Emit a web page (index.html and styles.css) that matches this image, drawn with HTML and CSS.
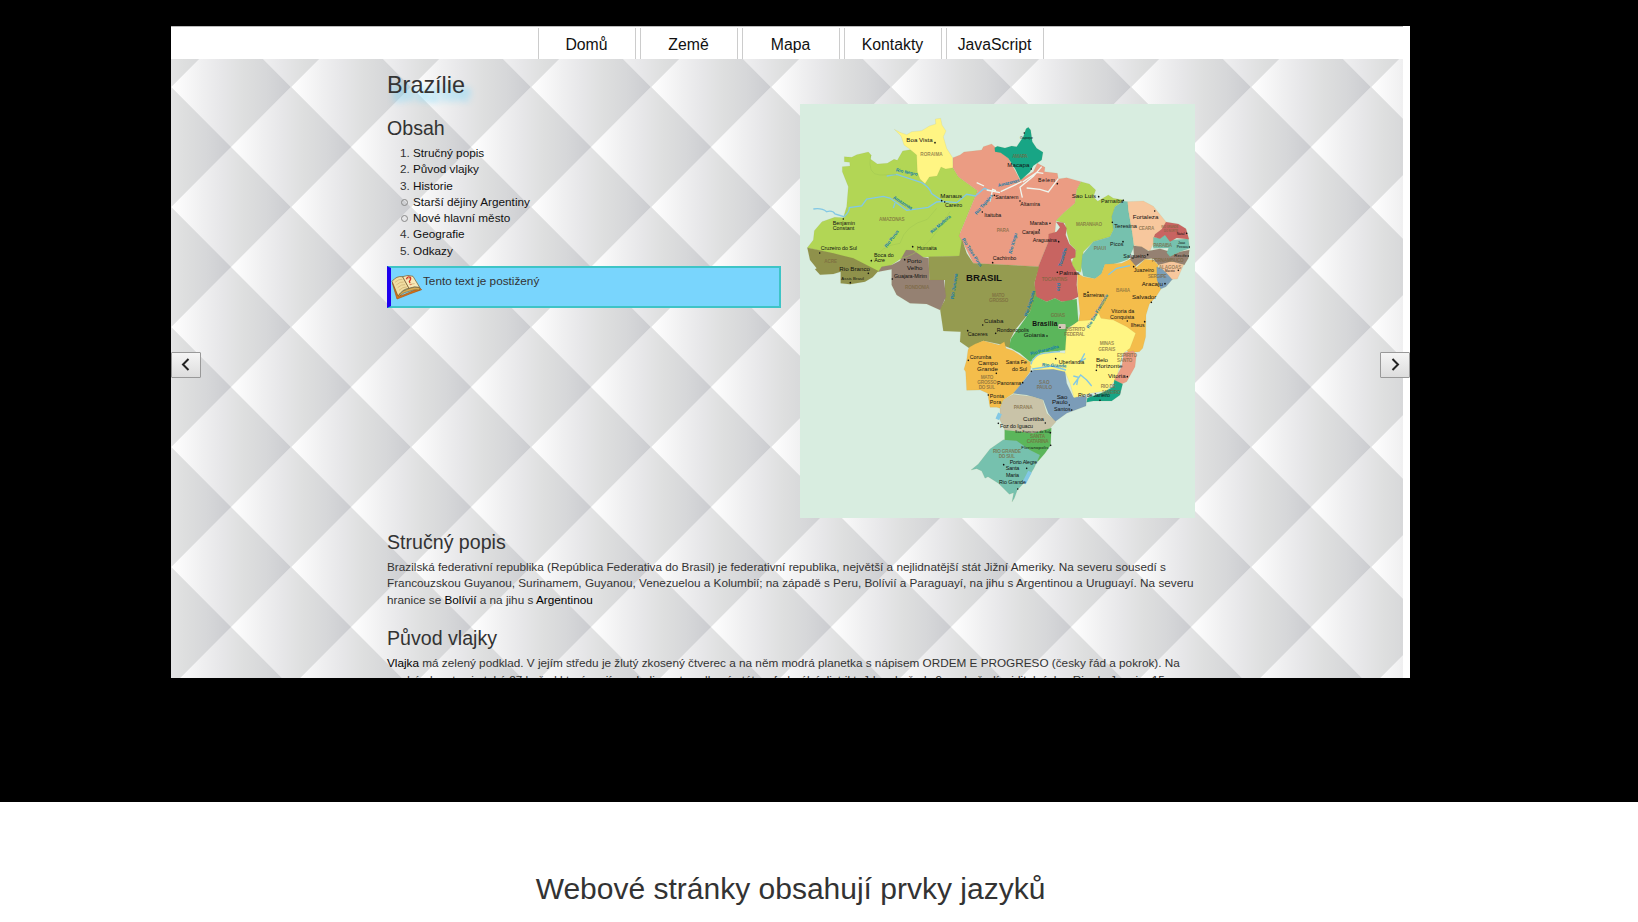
FILE: index.html
```html
<!DOCTYPE html>
<html lang="cs">
<head>
<meta charset="utf-8">
<title>Brazílie</title>
<link rel="stylesheet" href="styles.css">
</head>
<body>
<section class="showcase">
  <div class="slide">
    <nav class="nav">
      <a class="nav-item">Domů</a><a class="nav-item">Země</a><a class="nav-item">Mapa</a><a class="nav-item">Kontakty</a><a class="nav-item">JavaScript</a>
    </nav>
    <div class="page">
      <svg class="pattern" width="1232" height="619">
        <defs>
          <linearGradient id="facet" x1="0" x2="1" y1="0" y2="0">
            <stop offset="0" stop-color="#ffffff"/>
            <stop offset=".25" stop-color="#f0f0f1"/>
            <stop offset=".42" stop-color="#e7e7e9"/>
            <stop offset=".6" stop-color="#dedfdf"/>
            <stop offset=".8" stop-color="#d6d7d9"/>
            <stop offset="1" stop-color="#cbccd0"/>
          </linearGradient>
          <pattern id="quilt" width="120" height="120" y="28" patternUnits="userSpaceOnUse">
            <rect width="120" height="120" fill="#e5e5e6"/>
            <path d="M0 0L60-60L120 0L60 60Z" fill="url(#facet)"/>
            <path d="M0 120L60 60L120 120L60 180Z" fill="url(#facet)"/>
            <path d="M-60 60L0 0L60 60L0 120Z" fill="url(#facet)"/>
            <path d="M60 60L120 0L180 60L120 120Z" fill="url(#facet)"/>
          </pattern>
        </defs>
        <rect width="1232" height="619" fill="url(#quilt)"/>
      </svg>
      <main class="content">
        <div class="top">
          <div class="intro">
            <h1 class="title">Brazílie</h1>
            <h2 class="heading">Obsah</h2>
            <ul class="toc">
              <li><span class="num">1.</span>Stručný popis</li>
              <li><span class="num">2.</span>Původ vlajky</li>
              <li><span class="num">3.</span>Historie</li>
              <li><span class="num ring"></span>Starší dějiny Argentiny</li>
              <li><span class="num ring"></span>Nové hlavní město</li>
              <li><span class="num">4.</span>Geografie</li>
              <li><span class="num">5.</span>Odkazy</li>
            </ul>
            <div class="note">
              <svg class="book" width="31" height="27" viewBox="0 0 93 81">
                <path d="M4 27L7 23L29 66L87 42L92 47L56 60L18 75Z" fill="#dc7416" stroke="#a95411" stroke-width="2"/>
                <path d="M3 22Q17 5 35 8L54 43Q35 45 21 66Z" fill="#f0dda0" stroke="#71501f" stroke-width="2"/>
                <path d="M35 8Q51 1 66 7L86 40Q70 36 54 43Z" fill="#f8e9b8" stroke="#71501f" stroke-width="2"/>
                <path d="M21 66Q36 47 54 44Q69 37 87 41L85 48Q70 45 57 51Q39 53 23 68Z" fill="#d8ad56" stroke="#71501f" stroke-width="1.5"/>
                <path d="M12 25Q24 14 34 16M16 33Q28 22 38 24M20 41Q32 30 42 32M24 49Q36 38 47 39M48 15L60 12M54 31L71 29" fill="none" stroke="#c8a96c" stroke-width="2"/>
                <path d="M46 16Q50 5 58 10Q61 15 55 22L57 27M59 31L60 33" fill="none" stroke="#d13624" stroke-width="4"/>
              </svg>
              <span>Tento text je postižený</span>
            </div>
          </div>
          <svg class="map" width="395" height="414" viewBox="0 12 1185 1242">
            <rect y="12" width="1185" height="1242" fill="#d8ede0"/>
            <g class="land">
              <path fill="#b2d655" d="M133 170L155 172L170 164L205 156L214 166L211 177L232 192L262 190L282 178L292 181L308 153L330 149L352 157L459 203L475 230L533 272L480 400L490 430L485 468L372 472L300 478L270 498L235 515L100 462L22 443L40 420L43 392L66 365L104 352L130 353L140 320L145 260L127 215L127 200L150 198L149 187L133 185Z"/>
              <path fill="#fff583" d="M283 88L300 97L320 104L335 95L365 92L388 78L407 72L406 57L422 55L426 75L438 93L430 110L440 145L458 173L459 203L437 207L423 201L411 228L388 231L375 251L360 237L352 215L350 165L328 146L312 135L303 108Z"/>
              <path fill="#eb9c83" d="M459 173L480 165L492 156L545 150L550 140L575 132L600 155L625 175L660 240L700 215L712 190L735 202L733 215L772 220L775 237L800 233L843 245L830 270L825 310L790 340L768 362L765 395L745 425L715 500L580 493L520 490L490 430L477 408L533 272L475 230L459 203Z"/>
              <path fill="#18a585" d="M584 143L592 139L615 144L635 138L650 140L670 110L678 86L685 82L692 90L697 125L710 145L729 157L725 180L700 197L690 215L662 241L646 208L625 175L602 158L585 155Z"/>
              <path fill="#b2d655" d="M843 245L868 252L887 270L880 290L893 304L925 285L940 295L972 300L945 320L937 350L940 390L930 410L880 425L850 455L845 500L842 517L825 510L815 490L828 450L810 432L801 400L795 370L768 362L790 340L825 310L830 270Z"/>
              <path fill="#c86461" d="M768 365L790 368L800 385L797 405L808 432L827 450L826 472L812 477L818 496L832 520L830 555L835 590L810 603L785 605L765 595L740 605L705 590L703 550L715 500L745 425L746 402L770 395L780 382Z"/>
              <path fill="#76c1ae" d="M970 303L983 305L985 330L997 400L1002 440L985 478L965 485L930 495L915 493L904 522L885 536L850 528L844 500L847 465L880 425L930 410L940 390L935 350L945 320Z"/>
              <path fill="#f7c79d" d="M983 305L1030 303L1060 319L1100 368L1085 390L1070 403L1060 430L1050 453L1002 435L997 400L985 330Z"/>
              <path fill="#958172" d="M1000 437L1025 440L1045 453L1080 446L1105 454L1110 467L1140 455L1168 450L1165 475L1153 495L1115 487L1075 495L1060 475L1035 478L1002 502L985 482L1002 465Z"/>
              <path fill="#76c1ae" d="M1060 412L1080 415L1098 402L1115 420L1165 416L1169 445L1140 455L1110 470L1100 458L1106 444L1060 445Z"/>
              <path fill="#c86461" d="M1098 366L1135 372L1158 386L1167 418L1130 414L1110 425L1095 405L1080 416L1062 411L1065 403L1085 388Z"/>
              <path fill="#f4bd4b" d="M833 520L850 530L885 536L904 522L915 493L965 490L990 478L1010 502L1035 478L1060 480L1075 495L1070 530L1083 567L1068 590L1048 612L1038 645L1037 710L1028 745L1018 755L985 758L950 690L880 660L835 668L840 640L832 560Z"/>
              <path fill="#7b9fb8" d="M1070 500L1095 510L1118 537L1098 560L1082 567L1071 540Z"/>
              <path fill="#f7c79d" d="M1075 495L1115 484L1151 494L1132 537L1116 538L1100 520Z"/>
              <path fill="#959b50" d="M386 470L478 468L486 418L500 460L520 490L580 493L717 500L703 550L710 590L690 635L645 690L630 720L632 745L600 733L550 722L525 735L508 745L480 725L482 695L430 693L420 625L435 600L435 540L388 540Z"/>
              <path fill="#8f914b" d="M22 443L100 460L160 475L235 513L218 532L195 545L150 553L122 550L122 515L100 522L60 524L45 508L50 505L30 480Z"/>
              <path fill="#958172" d="M235 515L245 500L275 495L300 482L318 450L340 451L370 472L386 475L388 540L432 540L438 590L420 630L380 612L330 610L290 585L275 555L275 508Z"/>
              <path fill="#5bb65b" d="M705 588L740 605L765 595L785 605L830 597L835 665L803 684L801 750L750 755L720 775L690 785L660 760L628 742L632 718L690 635Z"/>
              <path fill="#f4bd4b" d="M508 742L525 732L550 722L597 735L613 725L618 745L640 752L695 790L690 815L665 850L640 880L610 900L600 925L590 922L570 922L563 880L541 870L500 871L497 815L492 808L500 780L504 750Z"/>
              <path fill="#7b9cb8" d="M695 812L730 803L795 810L800 850L820 892L860 890L858 918L800 940L765 965L745 940L730 900L680 885L640 880L665 850Z"/>
              <path fill="#fff583" d="M690 795L698 776L725 758L750 755L795 760L800 690L835 663L872 660L896 640L903 655L940 660L980 680L1007 700L990 745L967 762L950 835L920 872L870 880L822 893L810 850L795 815L760 808L700 810Z"/>
              <path fill="#eb9c83" d="M972 758L1000 752L1009 765L1005 800L980 845L965 852L943 840L965 800Z"/>
              <path fill="#18a585" d="M943 840L968 852L960 885L935 903L880 903L860 907L862 894L910 877L940 860Z"/>
              <path fill="#c9c3a8" d="M600 925L610 900L640 883L700 890L728 900L740 940L768 965L750 985L700 1002L650 993L614 990L600 960Z"/>
              <path fill="#5bb65b" d="M614 990L700 1000L754 984L752 1035L735 1060L713 1085L690 1060L614 1020Z"/>
              <path fill="#76c1ae" d="M513 1110L535 1092L570 1047L610 1019L650 1022L690 1050L720 1065L702 1105L680 1140L652 1170L643 1195L636 1206L641 1178L628 1183L595 1150L564 1130L555 1135L545 1113L530 1106Z"/>
            </g>
            <g class="water">
              <path d="M40 327Q65 323 80 335Q98 330 105 342L132 350Q148 336 148 323L185 318L200 297L250 289L270 294L290 309L320 331L385 322L410 306L430 304L470 308L500 283L526 288L553 265L570 272M260 228L290 223L365 248Q388 261 395 281L425 301M285 309L280 324M925 524L950 505L990 497M854 760L841 785L857 775M820 828L835 832L830 855M820 855L842 825L860 840L875 858"/>
              <path class="stream" d="M212 165Q201 225 240 225L288 224M213 490Q242 435 300 430Q315 375 382 358L410 325M300 475Q375 465 450 335"/>
              <path d="M693 793Q700 765 729 760L780 754M697 807L755 798L798 810"/>
              <path class="lake" d="M592 958L600 940M672 1150L690 1115"/>
              <path class="delta" d="M530 248L552 258M560 270L600 278M570 305L578 268L588 272M602 275L665 245M667 293L660 262L700 229L725 200M680 264L720 268L745 276L775 236M668 246L710 217L730 220"/>
            </g>
            <g class="state">
              <text x="361" y="169" textLength="67">RORAIMA</text><text x="237" y="362" textLength="77">AMAZONAS</text><text x="73" y="490" textLength="38">ACRE</text><text x="315" y="568" textLength="73">RONDONIA</text><text x="590" y="395" textLength="37">PARA</text><text x="637" y="174" textLength="46">AMAPA</text><text x="828" y="378" textLength="78">MARANHAO</text><text x="881" y="451" textLength="37">PIAUI</text><text x="1016" y="390" textLength="47">CEARA</text><text x="1060" y="440" textLength="56">PARAIBA</text><text x="1055" y="487" textLength="96">PERNAMBUCO</text><text x="1076" y="507" textLength="68">ALAGOAS</text><text x="1044" y="534" textLength="56">SERGIPE</text><text x="725" y="542" textLength="77">TOCANTINS</text><text x="948" y="576" textLength="42">BAHIA</text><text x="576" y="590" textLength="38">MATO</text><text x="567" y="606" textLength="58">GROSSO</text><text x="752" y="652" textLength="43">GOIAS</text><text x="796" y="692" textLength="59">DISTRITO</text><text x="793" y="709" textLength="61">FEDERAL</text><text x="899" y="736" textLength="43">MINAS</text><text x="895" y="752" textLength="51">GERAIS</text><text x="951" y="770" textLength="60">ESPIRITO</text><text x="951" y="786" textLength="46">SANTO</text><text x="542" y="836" textLength="38">MATO</text><text x="532" y="852" textLength="58">GROSSO</text><text x="536" y="867" textLength="49">DO SUL</text><text x="717" y="852" textLength="32">SAO</text><text x="710" y="868" textLength="46">PAULO</text><text x="641" y="926" textLength="57">PARANA</text><text x="690" y="1014" textLength="45">SANTA</text><text x="680" y="1029" textLength="66">CATARINA</text><text x="579" y="1058" textLength="84">RIO GRANDE</text><text x="596" y="1074" textLength="49">DO SUL</text><text x="902" y="865" textLength="45">RIO DE</text><text x="904" y="881" textLength="58">JANEIRO</text>
              <text x="1084" y="385" class="tiny">RIO GRANDE</text><text x="1092" y="397" class="tiny">DO NORTE</text>
            </g>
            <g class="river">
              <text transform="translate(287 214) rotate(12)" textLength="66">Rio Negro</text><text transform="translate(278 295) rotate(32)" textLength="66">Amazonas</text><text transform="translate(260 444) rotate(-53)" textLength="62">Rio Purus</text><text transform="translate(396 401) rotate(-41)" textLength="76">Rio Madeira</text><text transform="translate(530 345) rotate(-49)" textLength="76">Rio Tapajos</text><text transform="translate(485 418) rotate(57)" textLength="100">Rio Teles Pires</text><text transform="translate(461 598) rotate(-81)" textLength="78">Rio Juruena</text><text transform="translate(635 462) rotate(-75)" textLength="64">Rio Xingu</text><text transform="translate(595 261) rotate(-14)" textLength="66">Amazonas</text><text transform="translate(784 500) rotate(-73)" textLength="58">Tocantins</text><text transform="translate(770 550) rotate(85)" textLength="24">Rio</text><text transform="translate(682 650) rotate(-73)" textLength="80">Rio Araguaia</text><text transform="translate(692 766) rotate(-15)" textLength="88">Rio Paranaiba</text><text transform="translate(726 799) rotate(3)" textLength="73">Rio Grande</text><text transform="translate(867 686) rotate(-60)" textLength="116">Rio Sao Francisco</text>
            </g>
            <g class="city">
              <text x="319" y="127" textLength="79" class="mid">Boa Vista</text><text x="421" y="294" textLength="65" class="mid">Manaus</text><text x="435" y="322" textLength="52">Careiro</text><text x="98" y="374" textLength="67">Benjamin</text><text x="98" y="391" textLength="65">Constant</text><text x="62" y="451" textLength="109">Cruzeiro do Sul</text><text x="222" y="470" textLength="59">Boca do</text><text x="223" y="487" textLength="32">Acre</text><text x="351" y="451" textLength="59">Humaita</text><text x="118" y="512" textLength="92" class="mid">Rio Branco</text><text x="124" y="541" textLength="68" class="small2">Assis Brasil</text><text x="321" y="490" textLength="44" class="mid">Porto</text><text x="321" y="511" textLength="46" class="mid">Velho</text><text x="282" y="533" textLength="99">Guajara-Mirim</text><text x="498" y="543" textLength="108" class="country">BRASIL</text><text x="622" y="202" textLength="66" class="mid">Macapa</text><text x="660" y="116" class="tiny">Oiapoque</text><text x="714" y="247" textLength="51">Belem</text><text x="586" y="297" textLength="69">Santarem</text><text x="661" y="319" textLength="59">Altamira</text><text x="553" y="350" textLength="51">Itaituba</text><text x="689" y="375" textLength="54">Maraba</text><text x="666" y="402" textLength="54">Carajas</text><text x="698" y="426" textLength="72">Araguaina</text><text x="578" y="481" textLength="71">Cachimbo</text><text x="815" y="293" textLength="73" class="mid">Sao Luis</text><text x="903" y="309" textLength="67">Parnaiba</text><text x="998" y="358" textLength="77" class="mid">Fortaleza</text><text x="942" y="384" textLength="69" class="mid">Teresina</text><text x="930" y="438" textLength="40">Picos</text><text x="970" y="473" textLength="68">Salgueiro</text><text x="1001" y="515" textLength="61">Juazeiro</text><text x="1025" y="557" textLength="64" class="mid">Aracaju</text><text x="996" y="597" textLength="73" class="mid">Salvador</text><text x="777" y="526" textLength="62" class="mid">Palmas</text><text x="849" y="592" textLength="64">Barreiras</text><text x="1130" y="405" class="small">Natal</text><text x="1134" y="432" class="small">Joao</text><text x="1130" y="443" class="small">Pessoa</text><text x="1123" y="470" textLength="38" class="small2">Recife</text><text x="1095" y="516" class="tiny">Maceio</text><text x="934" y="640" textLength="69">Vitoria da</text><text x="930" y="658" textLength="73">Conquista</text><text x="992" y="680" textLength="42">Ilheus</text><text x="552" y="669" textLength="58" class="mid">Cuiaba</text><text x="590" y="695" textLength="97">Rondonopolis</text><text x="503" y="709" textLength="60">Caceres</text><text x="697" y="677" textLength="75" class="capital">Brasilia</text><text x="671" y="711" textLength="64" class="mid">Goiania</text><text x="776" y="791" textLength="77">Uberlandia</text><text x="888" y="786" textLength="36" class="mid">Belo</text><text x="888" y="803" textLength="79" class="mid">Horizonte</text><text x="924" y="835" textLength="53" class="mid">Vitoria</text><text x="834" y="891" textLength="96">Rio de Janeiro</text><text x="509" y="776" textLength="65">Corumba</text><text x="534" y="796" textLength="60" class="mid">Campo</text><text x="531" y="812" textLength="63" class="mid">Grande</text><text x="617" y="793" textLength="64">Santa Fe</text><text x="636" y="812" textLength="45">do Sul</text><text x="591" y="854" textLength="73">Panorama</text><text x="569" y="893" textLength="43">Ponta</text><text x="569" y="911" textLength="35">Pora</text><text x="770" y="896" textLength="32" class="mid">Sao</text><text x="756" y="912" textLength="47" class="mid">Paulo</text><text x="762" y="934" textLength="50">Santos</text><text x="669" y="962" textLength="63" class="mid">Curitiba</text><text x="600" y="983" textLength="99">Foz do Iguacu</text><text x="645" y="1000" textLength="104" class="small">Sao Francisco do Sul</text><text x="664" y="1046" textLength="81" class="small2">Florianopolis</text><text x="629" y="1092" textLength="83">Porto Alegre</text><text x="617" y="1111" textLength="41">Santa</text><text x="618" y="1130" textLength="39">Maria</text><text x="597" y="1153" textLength="81">Rio Grande</text>
            </g>
            <rect x="775" y="672" width="22" height="15" rx="3" fill="#d5c8b8"/>
            <path class="dots" d="M405 128h0M425 302h0M434 306h0M130 357h0M59 459h0M214 482h0M338 440h0M205 520h0M151 548h0M314 479h0M277 537h0M673 99h0M694 207h0M772 251h0M583 286h0M660 303h0M547 336h0M750 370h0M718 390h0M776 425h0M578 488h0M896 290h0M970 301h0M1064 333h0M937 367h0M969 425h0M1043 464h0M1001 500h0M1095 551h0M1054 607h0M772 517h0M864 577h0M1160 400h0M1168 441h0M1165 468h0M1135 511h0M982 663h0M1034 665h0M548 675h0M587 700h0M503 692h0M780 682h0M741 708h0M767 776h0M889 811h0M982 830h0M900 901h0M505 781h0M589 820h0M694 814h0M668 848h0M565 885h0M808 915h0M815 930h0M736 969h0M595 970h0M751 998h0M752 1036h0M611 1094h0M680 1105h0M653 1167h0"/>
          </svg>
        </div>
        <h2 class="heading article-heading">Stručný popis</h2>
        <div class="text">
          <div class="line">Brazilská federativní republika (República Federativa do Brasil) je federativní republika, největší a nejlidnatější stát Jižní Ameriky. Na severu sousedí s</div>
          <div class="line">Francouzskou Guyanou, Surinamem, Guyanou, Venezuelou a Kolumbií; na západě s Peru, Bolívií a Paraguayí, na jihu s Argentinou a Uruguayí. Na severu</div>
          <div class="line">hranice se <a>Bolívií</a> a na jihu s <a>Argentinou</a></div>
        </div>
        <h2 class="heading article-heading second">Původ vlajky</h2>
        <div class="text">
          <div class="line"><a>Vlajka</a> má zelený podklad. V jejím středu je žlutý zkosený čtverec a na něm modrá planetka s nápisem ORDEM E PROGRESO (česky řád a pokrok). Na</div>
          <div class="line">modrá planetce je také 27 hvězd které mají symbolizovat spolkové státy a federální distrikt. Jde o hvězdy 9 souhvězdí, viditelných v Rio de Janeiru 15</div>
        </div>
      </main>
    </div>
    <button class="arrow prev" aria-label="Předchozí"><svg width="28" height="24"><path d="M16.5 6L11 11.5L16.5 17"/></svg></button>
    <button class="arrow next" aria-label="Další"><svg width="28" height="24"><path d="M11.5 6L17 11.5L11.5 17"/></svg></button>
  </div>
</section>
<section class="below"><h2 class="caption">Webové stránky obsahují prvky jazyků</h2></section>
</body>
</html>
```
FILE: styles.css
```css
* { box-sizing: border-box; }
body { margin: 0; height: 922px; overflow: hidden; background: #fff; color: #333; font-family: "Liberation Sans", Arial, sans-serif; }
h1, h2, ul { margin: 0; padding: 0; font-weight: 400; }
.showcase { height: 802px; padding: 26px 0 0 171px; background: #000; }
.slide { position: relative; width: 1239px; height: 652px; overflow: hidden; background: #fff; }
.nav { display: flex; justify-content: center; gap: 4px; width: 1232px; height: 33px; padding: 1px 0 0 7px; border-top: 1px solid #bbb; }
.nav-item { width: 98px; height: 31px; border: solid #ccc; border-width: 0 1px; color: #111; font-size: 15.8px; line-height: 33px; text-align: center; }
.page { position: relative; width: 1232px; height: 619px; }
.pattern { position: absolute; inset: 0; }
.content { position: relative; width: 808px; margin-left: 216px; }
.top { display: flex; justify-content: space-between; height: 459px; }
.intro { width: 394px; padding-top: 11px; }
.title { font-size: 23.4px; line-height: 30px; text-shadow: 6px 8px 6px #7ed8fa; }
.heading { font-size: 19.6px; line-height: 24px; }
.intro .heading { margin-top: 16px; }
.toc { padding-top: 5px; list-style: none; font-size: 11.76px; line-height: 16.3px; color: #111; white-space: nowrap; }
.toc li { display: flex; align-items: center; height: 16.3px; }
.num { width: 26px; padding-left: 13px; color: #333; }
.ring { display: flex; padding-left: 14px; }
.ring::before { content: ""; width: 5px; height: 5px; border: .8px solid #888; border-radius: 50%; }
.note { display: flex; gap: 1px; width: 394px; height: 42px; margin-top: 7px; border: 2px solid #3ec4c6; border-left: 4px solid #1f00ee; background: #79d5fd; font-size: 11.76px; line-height: 26px; }
.book { margin-top: 6px; }
.map { width: 395px; height: 414px; margin: 45px 0 0; }
.article-heading { padding-top: 12px; height: 37px; }
.second { margin-top: 6.5px; }
.text { padding-top: 4px; font-size: 11.76px; line-height: 16.3px; }
.line { white-space: nowrap; }
.line a { color: #000; }
.arrow { position: absolute; top: 326px; width: 30px; height: 26px; padding: 0; border: 1px solid #999; border-radius: 1px; background: linear-gradient(#f5f5f5, #ddd); }
.arrow svg { display: block; fill: none; stroke: #222; stroke-width: 2; }
.prev { left: 0; }
.next { right: 0; }
.caption { width: 1581px; padding-top: 67px; font-size: 30px; line-height: 40px; text-align: center; }
.land path { stroke: #8a8a4b; stroke-opacity: .3; stroke-width: 1; }
.water path { fill: none; stroke: #83c8e5; stroke-width: 4; }
.water .stream { stroke: #a0c653; stroke-width: 1.5; }
.water .lake { stroke-width: 12; }
.water .delta { stroke: #eef6ef; stroke-width: 4; }
.city { fill: #111; font-size: 16px; }
.mid { font-size: 18.5px; }
.small { font-size: 10px; }
.small2 { font-size: 13px; }
.tiny { font-size: 9px; }
.country { font-size: 29px; font-weight: 700; }
.capital { font-size: 20px; font-weight: 700; }
.state { fill: #79663d; fill-opacity: .75; font-size: 14px; font-weight: 700; }
.state .tiny { font-size: 8px; }
.river { fill: #167eab; font-size: 14px; font-weight: 700; }
.dots { fill: none; stroke: #111; stroke-width: 5; stroke-linecap: round; }
```
